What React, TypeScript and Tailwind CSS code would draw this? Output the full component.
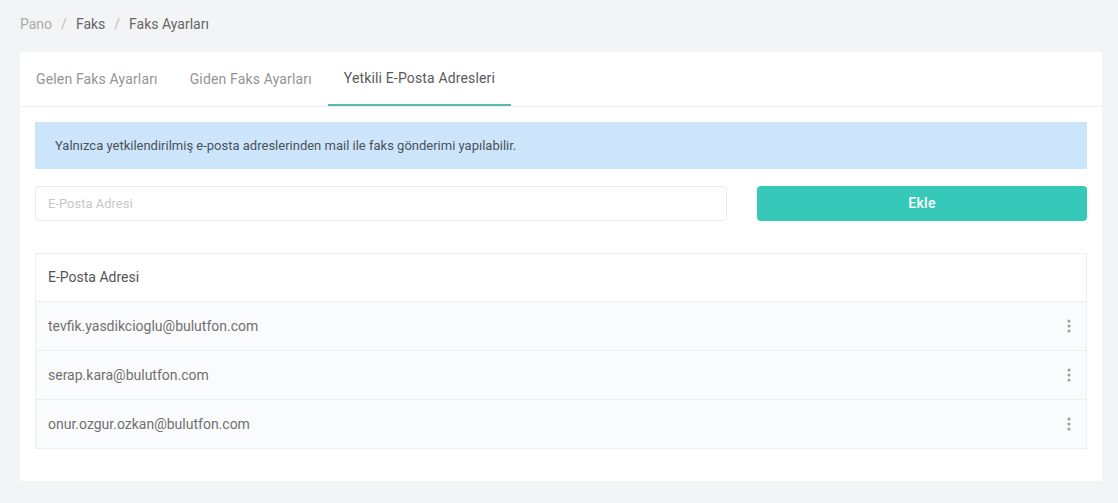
const emails = [
  'tevfik.yasdikcioglu@bulutfon.com',
  'serap.kara@bulutfon.com',
  'onur.ozgur.ozkan@bulutfon.com',
]

const tabs = ['Gelen Faks Ayarları', 'Giden Faks Ayarları', 'Yetkili E-Posta Adresleri']

function Dots() {
  return (
    <svg width="4" height="14" viewBox="0 0 4 14" className="text-[#a0a0a0]">
      <circle cx="2" cy="2" r="1.6" fill="currentColor" />
      <circle cx="2" cy="7" r="1.6" fill="currentColor" />
      <circle cx="2" cy="12" r="1.6" fill="currentColor" />
    </svg>
  )
}

export default function App() {
  return (
    <div className="min-h-[503px] bg-[#f3f4f6] pl-5 pr-4 pt-[14px] pb-[23px] font-['Roboto',sans-serif]">
      <nav className="flex items-center gap-2 text-[14px] leading-5 text-[#666]">
        <span className="text-[#ababab]">Pano</span>
        <span className="text-[#bdbdbd] px-px">/</span>
        <span>Faks</span>
        <span className="text-[#bdbdbd] px-px">/</span>
        <span>Faks Ayarları</span>
      </nav>

      <div className="mt-[18px] bg-white pb-8">
        <div className="flex border-b border-[#eceef0]">
          {tabs.map((t, i) => (
            <div
              key={t}
              className={
                i === 2
                  ? 'px-4 h-[54px] flex items-center text-[14px] tracking-[0.15px] text-[#5a5a5a] border-b-2 border-[#5db7b1] -mb-px'
                  : 'px-4 h-[54px] flex items-center text-[14px] tracking-[0.15px] text-[#959595]'
              }
            >
              {t}
            </div>
          ))}
        </div>

        <div className="px-[15px]">
          <div className="mt-[15px] h-[47px] bg-[#cce5fa] px-5 flex items-center text-[13px] text-[#4a525a]">
            Yalnızca yetkilendirilmiş e-posta adreslerinden mail ile faks gönderimi yapılabilir.
          </div>

          <div className="mt-[17px] flex">
            <div className="w-[692px] h-[35px] border border-[#e8eaec] rounded-sm flex items-center px-3 text-[13px] text-[#c8c8c8]">
              E-Posta Adresi
            </div>
            <button className="ml-[30px] flex-1 h-[35px] rounded-sm bg-[#36c9b9] text-white text-[14px] font-medium tracking-wide">
              Ekle
            </button>
          </div>

          <div className="mt-8 border border-[#eceef0]">
            <div className="h-[47px] flex items-center px-3 text-[14px] text-[#555]">E-Posta Adresi</div>
            {emails.map((e) => (
              <div
                key={e}
                className="h-[49px] border-t border-[#eceef0] bg-[#fafbfc] flex items-center justify-between pl-3 pr-[15px] text-[14px] text-[#707070]"
              >
                <span>{e}</span>
                <Dots />
              </div>
            ))}
          </div>
        </div>
      </div>
    </div>
  )
}
